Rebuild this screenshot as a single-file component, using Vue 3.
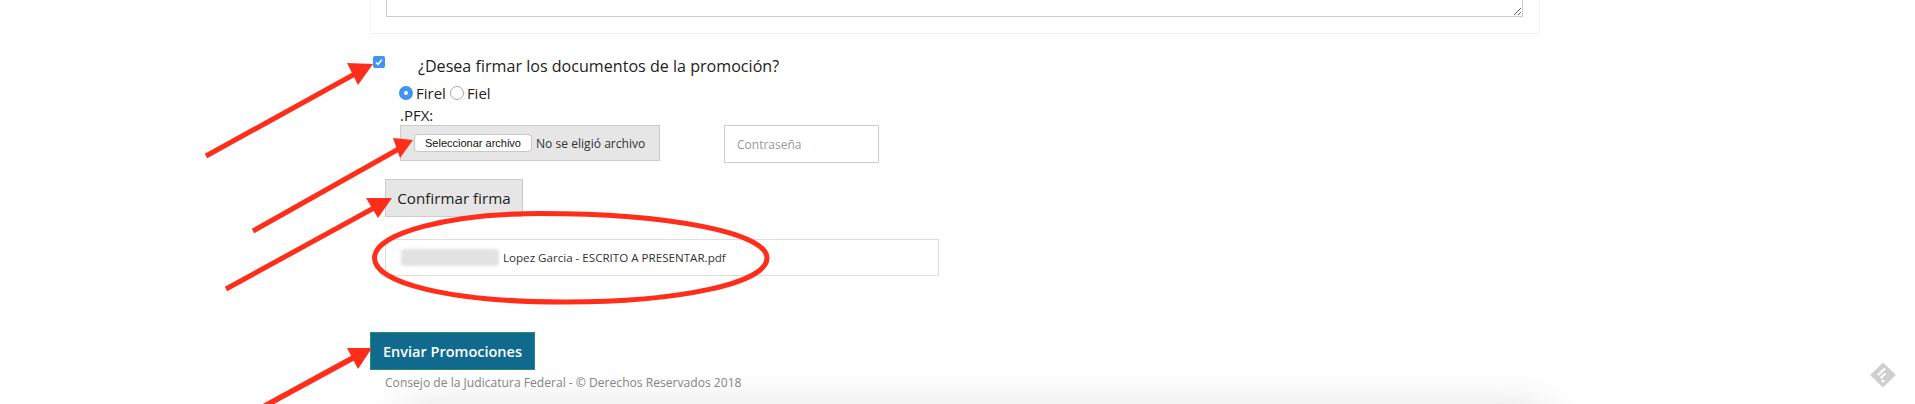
<script setup>
const arrows = [
  { line: [206, 156, 362, 70], head: '373,64 347,63 358,85' },
  { line: [253, 231, 404, 146], head: '413,140 393,138 400,158' },
  { line: [226, 289, 383, 203], head: '392,198 366,198 378,218' },
  { line: [250, 414, 362, 353], head: '372,348 347,348 358,369', wide: true }
]
</script>

<template>
  <div class="page">
    <div class="footer-shadow"></div>

    <section class="panel">
      <textarea class="notes"></textarea>
    </section>

    <form class="form" @submit.prevent>
      <div class="question">
        <span class="check">
          <svg width="8" height="8" viewBox="0 0 8 8"><path d="M1 4.4 3 6.4 7 1.4" fill="none" stroke="#fff" stroke-width="1.6" /></svg>
        </span>
        <span class="question-text">¿Desea firmar los documentos de la promoción?</span>
      </div>

      <div class="radios">
        <span class="radio on"></span><span class="radio-label">Firel</span>
        <span class="radio"></span><span class="radio-label">Fiel</span>
      </div>

      <div class="pfx">.PFX:</div>

      <div class="credentials">
        <div class="file-box">
          <button type="button" class="file-btn">Seleccionar archivo</button>
          <span class="file-none">No se eligió archivo</span>
        </div>
        <input class="password" type="password" placeholder="Contraseña" />
      </div>

      <button type="button" class="confirm">Confirmar firma</button>

      <div class="file-row">
        <span class="blurred"></span>
        <span class="file-name">Lopez Garcia - ESCRITO A PRESENTAR.pdf</span>
      </div>

      <button type="button" class="send">Enviar Promociones</button>
      <p class="copyright">Consejo de la Judicatura Federal - © Derechos Reservados 2018</p>
    </form>

    <svg class="markup" width="1915" height="404" viewBox="0 0 1915 404">
      <path d="M374.5 258C374.5 233 450 213.5 540 213.5C670 213.5 767 233 767 258C767 283 680 302 565 302C450 302 374.5 283 374.5 258Z" fill="none" stroke="#ff2d1a" stroke-width="5" />
      <g v-for="(a, i) in arrows" :key="i">
        <line :x1="a.line[0]" :y1="a.line[1]" :x2="a.line[2]" :y2="a.line[3]" stroke="#ff2d1a" :stroke-width="a.wide ? 5.5 : 5" />
        <polygon :points="a.head" fill="#ff2d1a" />
      </g>
    </svg>

    <svg class="feed" width="26" height="24" viewBox="0 0 26 24">
      <path d="M13 1 L24.5 12 L13 23 L1.5 12 Z" fill="#cfcfcf" stroke="#cfcfcf" stroke-width="2" stroke-linejoin="round" />
      <path d="M8 12 L15 5.5M10.5 15 L15.5 10.5" stroke="#fff" stroke-width="2.2" fill="none" />
      <circle cx="13" cy="18" r="1.5" fill="#fff" />
    </svg>
  </div>
</template>

<style>
html, body { margin: 0; background: #fff; }
</style>

<style scoped>
.page {
  position: relative;
  width: 1915px;
  height: 404px;
  overflow: hidden;
  background: #fff;
  font-family: "Open Sans", sans-serif;
  color: #222;
}
.footer-shadow {
  position: absolute;
  left: 410px;
  top: 420px;
  width: 1130px;
  height: 60px;
  box-shadow: 0 0 50px 6px rgba(0, 0, 0, 0.17);
}
.panel {
  box-sizing: border-box;
  width: 1170px;
  height: 34px;
  margin-left: 370px;
  padding-left: 16px;
  overflow: hidden;
  background: #fff;
  border-right: 1px solid #f3f3f3;
  border-bottom: 1px solid #f0f0f0;
  border-left: 1px solid #f6f6f6;
}
.notes {
  display: block;
  box-sizing: border-box;
  width: 1137px;
  height: 117px;
  margin: -100px 0 0 -1px;
  border: 1px solid #ccc;
  background: #fff;
  resize: both;
}
.form {
  display: flex;
  flex-direction: column;
  align-items: flex-start;
  margin-left: 370px;
}
.question {
  display: flex;
  align-items: flex-start;
  height: 24px;
  margin-top: 22px;
  margin-left: 3px;
}
.check {
  display: flex;
  align-items: center;
  justify-content: center;
  width: 12px;
  height: 12px;
  border-radius: 2px;
  background: #3f93f3;
}
.question-text {
  margin-left: 33px;
  font-size: 16.1px;
  line-height: 20px;
}
.radios {
  display: flex;
  align-items: center;
  height: 16px;
  margin-top: 5px;
  margin-left: 29px;
  font-size: 15px;
  line-height: 16px;
}
.radio {
  box-sizing: border-box;
  flex: none;
  width: 14px;
  height: 14px;
  border: 1px solid #aaa;
  border-radius: 50%;
  background: #fff;
}
.radio.on {
  border: 5px solid #3f93f3;
}
.radio-label {
  margin-left: 3px;
  margin-right: 4px;
}
.pfx {
  height: 20px;
  margin-top: 4px;
  margin-left: 30px;
  font-size: 15px;
  line-height: 20px;
}
.credentials {
  display: flex;
  align-items: flex-start;
  margin-left: 30px;
}
.file-box {
  display: flex;
  align-items: center;
  box-sizing: border-box;
  width: 260px;
  height: 36px;
  padding-left: 13px;
  border: 1px solid #ccc;
  background: #e6e6e6;
}
.file-btn {
  box-sizing: border-box;
  width: 118px;
  height: 18px;
  padding: 0;
  border: 1px solid #c8c8c8;
  border-radius: 4px;
  background: #fff;
  font-family: "Liberation Sans", sans-serif;
  font-size: 11px;
  color: #111;
}
.file-none {
  margin-left: 4px;
  font-size: 12.1px;
  color: #333;
}
.password {
  box-sizing: border-box;
  width: 155px;
  height: 38px;
  margin-left: 64px;
  padding: 0 12px;
  border: 1px solid #ccc;
  background: #fff;
  font-family: inherit;
  font-size: 12px;
}
.password::placeholder {
  color: #999;
  opacity: 1;
}
.confirm {
  box-sizing: border-box;
  width: 138px;
  height: 38px;
  margin-top: 16px;
  margin-left: 15px;
  padding: 0;
  border: 1px solid #ccc;
  background: #e6e6e6;
  font-family: inherit;
  font-size: 15.2px;
  color: #222;
}
.file-row {
  display: flex;
  align-items: center;
  box-sizing: border-box;
  width: 554px;
  height: 37px;
  margin-top: 22px;
  margin-left: 15px;
  padding-left: 15px;
  border: 1px solid #ddd;
}
.blurred {
  width: 98px;
  height: 17px;
  background: #e2e2e2;
  border-radius: 4px;
  filter: blur(1.5px);
}
.file-name {
  margin-left: 4px;
  font-size: 11.6px;
  color: #333;
}
.send {
  box-sizing: border-box;
  width: 165px;
  height: 38px;
  margin-top: 56px;
  padding: 0;
  border: 1px solid #2e8b6a;
  background: #106a8e;
  font-family: inherit;
  font-size: 14.5px;
  font-weight: 600;
  color: #fff;
}
.copyright {
  margin: 5px 0 0 15px;
  font-size: 12.1px;
  line-height: 16px;
  color: #888;
}
.markup {
  position: absolute;
  left: 0;
  top: 0;
  pointer-events: none;
}
.feed {
  position: absolute;
  left: 1870px;
  top: 363px;
}
</style>
